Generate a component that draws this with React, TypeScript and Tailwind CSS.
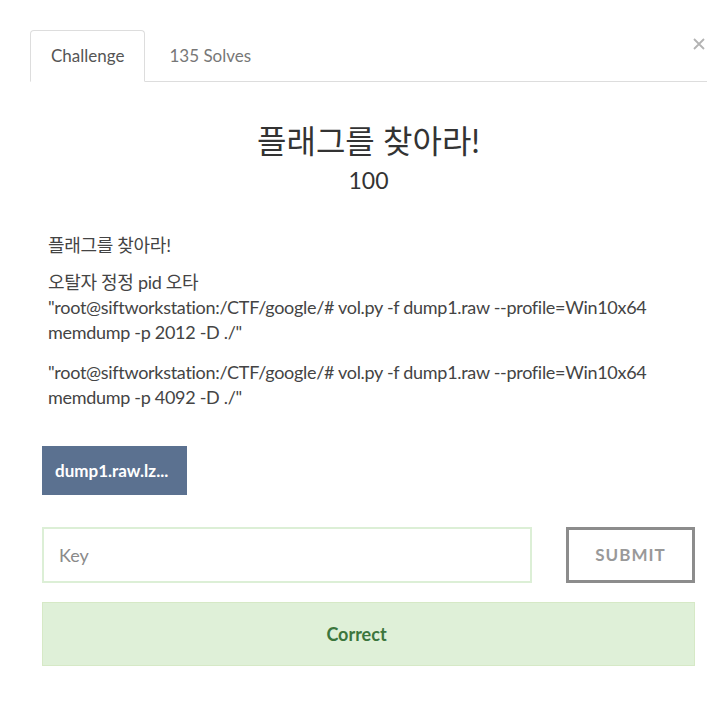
import React, { useState } from 'react';

const font = { fontFamily: 'Lato, "Noto Sans CJK KR", sans-serif' };

const App: React.FC = () => {
  const [tab, setTab] = useState<'challenge' | 'solves'>('challenge');
  const [key, setKey] = useState('');

  return (
    <div className="min-h-[728px] bg-white pl-[30px] pr-[19px] pt-[30px]" style={font}>
      <div className="relative">
        <div className="flex border-b border-[#dddddd]">
          <button
            onClick={() => setTab('challenge')}
            className={`-mb-px h-[52px] rounded-t-[4px] border px-5 text-[17px] ${
              tab === 'challenge' ? 'border-[#dddddd] border-b-white bg-white text-[#555555]' : 'border-transparent text-[#777777]'
            }`}
          >
            Challenge
          </button>
          <button
            onClick={() => setTab('solves')}
            className={`-mb-px ml-[3px] h-[52px] rounded-t-[4px] border px-5 text-[17px] ${
              tab === 'solves' ? 'border-[#dddddd] border-b-white bg-white text-[#555555]' : 'border-transparent text-[#777777]'
            }`}
          >
            135 Solves
          </button>
        </div>
        <button className="absolute right-[2px] top-[8px]" aria-label="Close">
          <svg width="12" height="12" viewBox="0 0 12 12">
            <path d="M1 1L11 11M11 1L1 11" stroke="#b3b3b3" strokeWidth="1.8" />
          </svg>
        </button>
      </div>

      <div className="px-3">
        <h3 className="mt-[40px] text-center text-[32px] leading-[38px] text-[#333333]">플래그를 찾아라!</h3>
        <h4 className="mt-[6px] text-center text-[23px] leading-[28px] text-[#333333]">100</h4>

        <div className="mt-[39px] px-[6px] text-[18px] leading-[25px] tracking-[-0.3px] text-[#444444]">
          <p className="mb-[12px]">플래그를 찾아라!</p>
          <p className="mb-[15px]">
            오탈자 정정 pid 오타
            <br />
            "root@siftworkstation:/CTF/google/# vol.py -f dump1.raw --profile=Win10x64 memdump -p 2012 -D ./"
          </p>
          <p>"root@siftworkstation:/CTF/google/# vol.py -f dump1.raw --profile=Win10x64 memdump -p 4092 -D ./"</p>
        </div>

        <div className="mt-[36px]">
          <button className="flex h-[49px] w-[145px] items-center bg-[#5b7190] pl-[13px] text-[17px] font-bold text-white">
            dump1.raw.lz...
          </button>
        </div>

        <div className="mt-[32px] flex items-center gap-[34px]">
          <input
            value={key}
            onChange={e => setKey(e.target.value)}
            placeholder="Key"
            className="h-[56px] flex-1 border-2 border-[#dcefd6] px-[15px] text-[18px] text-[#555555] outline-none placeholder:text-[#8a8a8a]"
          />
          <button className="h-[56px] w-[129px] border-[3px] border-[#8c8c8c] bg-white text-[17px] font-bold tracking-[1px] text-[#999999]">
            SUBMIT
          </button>
        </div>

        <div className="mt-[19px] flex h-[64px] items-center justify-center border border-[#d6e9c6] bg-[#dff0d8] pr-[24px] text-[18px] font-bold text-[#3c763d]">
          Correct
        </div>
      </div>
    </div>
  );
};

export default App;
